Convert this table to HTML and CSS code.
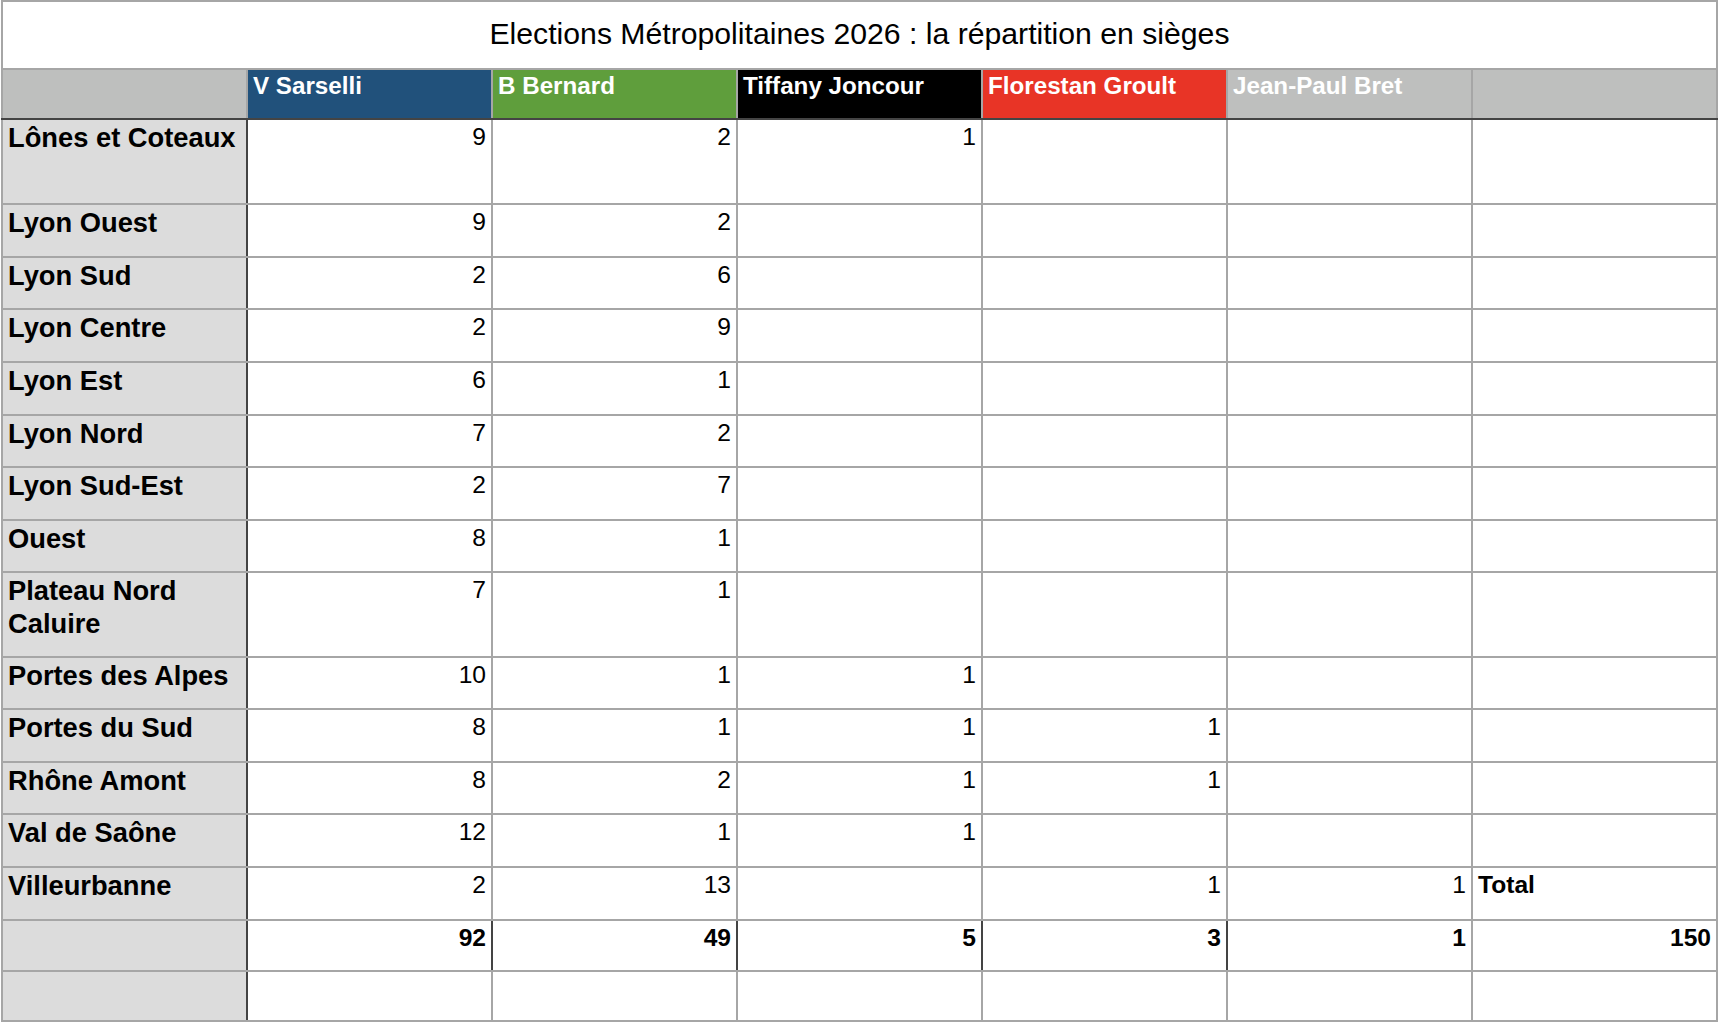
FILE: index.html
```html
<!DOCTYPE html>
<html lang="fr">
<head>
<meta charset="utf-8">
<title>Elections Métropolitaines 2026</title>
<link rel="stylesheet" href="styles.css">
</head>
<body>
<table class="sheet">
  <colgroup>
    <col class="c"><col class="c"><col class="c"><col class="c"><col class="c"><col class="c"><col class="c">
  </colgroup>
  <thead>
    <tr class="title-row"><th colspan="7" class="title">Elections Métropolitaines 2026 : la répartition en sièges</th></tr>
    <tr class="head-row">
      <th class="corner"></th>
      <th class="cand blue">V Sarselli</th>
      <th class="cand green">B Bernard</th>
      <th class="cand black">Tiffany Joncour</th>
      <th class="cand red">Florestan Groult</th>
      <th class="cand grey">Jean-Paul Bret</th>
      <th class="cand grey"></th>
    </tr>
  </thead>
  <tbody>
    <tr class="tall"><th class="label">Lônes et Coteaux</th><td class="num">9</td><td class="num">2</td><td class="num">1</td><td></td><td></td><td></td></tr>
    <tr class="r53"><th class="label">Lyon Ouest</th><td class="num">9</td><td class="num">2</td><td></td><td></td><td></td><td></td></tr>
    <tr class="r52"><th class="label">Lyon Sud</th><td class="num">2</td><td class="num">6</td><td></td><td></td><td></td><td></td></tr>
    <tr class="r53"><th class="label">Lyon Centre</th><td class="num">2</td><td class="num">9</td><td></td><td></td><td></td><td></td></tr>
    <tr class="r53"><th class="label">Lyon Est</th><td class="num">6</td><td class="num">1</td><td></td><td></td><td></td><td></td></tr>
    <tr class="r52"><th class="label">Lyon Nord</th><td class="num">7</td><td class="num">2</td><td></td><td></td><td></td><td></td></tr>
    <tr class="r53"><th class="label">Lyon Sud-Est</th><td class="num">2</td><td class="num">7</td><td></td><td></td><td></td><td></td></tr>
    <tr class="r52"><th class="label">Ouest</th><td class="num">8</td><td class="num">1</td><td></td><td></td><td></td><td></td></tr>
    <tr class="tall"><th class="label">Plateau Nord Caluire</th><td class="num">7</td><td class="num">1</td><td></td><td></td><td></td><td></td></tr>
    <tr class="r52"><th class="label">Portes des Alpes</th><td class="num">10</td><td class="num">1</td><td class="num">1</td><td></td><td></td><td></td></tr>
    <tr class="r53"><th class="label">Portes du Sud</th><td class="num">8</td><td class="num">1</td><td class="num">1</td><td class="num">1</td><td></td><td></td></tr>
    <tr class="r52"><th class="label">Rhône Amont</th><td class="num">8</td><td class="num">2</td><td class="num">1</td><td class="num">1</td><td></td><td></td></tr>
    <tr class="r53"><th class="label">Val de Saône</th><td class="num">12</td><td class="num">1</td><td class="num">1</td><td></td><td></td><td></td></tr>
    <tr class="r53"><th class="label">Villeurbanne</th><td class="num">2</td><td class="num">13</td><td></td><td class="num">1</td><td class="num">1</td><td class="total-label">Total</td></tr>
    <tr class="totals"><th class="label"></th><td class="num strong dark">92</td><td class="num strong dark">49</td><td class="num strong dark">5</td><td class="num strong dark">3</td><td class="num strong">1</td><td class="num strong">150</td></tr>
    <tr class="empty"><th class="label"></th><td></td><td></td><td></td><td></td><td></td><td></td></tr>
  </tbody>
</table>
</body>
</html>
```

FILE: styles.css
```css
html, body {
  margin: 0;
  padding: 0;
  background: #ffffff;
}

body {
  font-family: "Liberation Sans", Arial, Helvetica, sans-serif;
  color: #000;
}

.sheet {
  margin-left: 1px;
  width: 1717px;
  table-layout: fixed;
  border-collapse: collapse;
  border: 2px solid #a6a6a6;
}

.sheet th,
.sheet td {
  border: 2px solid #a6a6a6;
  padding: 3px 5px 0 5px;
  vertical-align: top;
  overflow: hidden;
  line-height: 1.2;
}

.title-row {
  height: 68px;
}

.sheet .title {
  border-top-width: 1px;
  padding: 0 0 2px 0;
  vertical-align: middle;
  text-align: center;
  font-weight: normal;
  font-size: 30.2px;
  background: #fff;
}

.head-row {
  height: 50px;
}

.head-row th {
  border-bottom: 2px solid #444;
  font-size: 24.2px;
  font-weight: bold;
  color: #fff;
  text-align: left;
  padding: 1px 5px 0 5px;
}

.corner { background: #bebfbe; }
.cand.blue { background: #21517b; }
.cand.green { background: #5f9e3c; }
.cand.black { background: #000; }
.cand.red { background: #e83426; }
.cand.grey { background: #bebfbe; }

.label {
  background: #dcdcdc;
  text-align: left;
  font-weight: bold;
  font-size: 27.3px;
  border-right: 2px solid #444 !important;
  padding-left: 5px;
  padding-right: 0 !important;
  padding-top: 2px !important;
  line-height: 32px;
}

.sheet td {
  font-size: 24.6px;
  padding-top: 2px;
}

.num {
  text-align: right;
  padding-right: 5px;
}

.strong { font-weight: bold; }

.sheet td.dark {
  border-right: 2px solid #444;
}

.total-label {
  font-weight: bold;
  text-align: left;
}

.tall { height: 85px; }
.r52 { height: 52px; }
.r53 { height: 53px; }
.totals { height: 51px; }
.empty { height: 50px; }
```
